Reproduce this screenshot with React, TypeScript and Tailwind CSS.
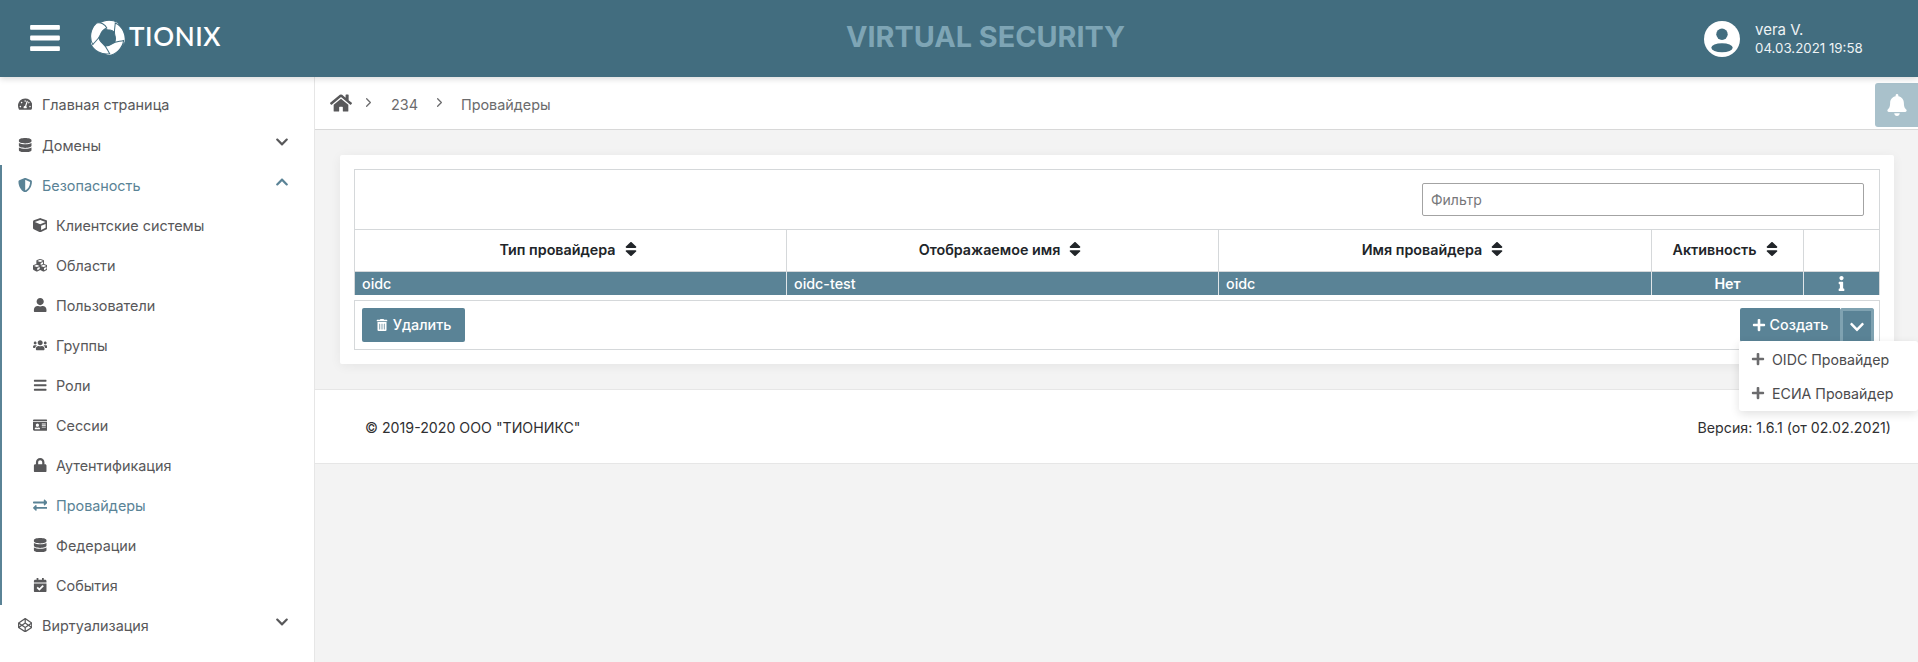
import type { ReactNode } from 'react';
import {
  FaBars, FaBell, FaCalendarCheck, FaChevronDown, FaChevronUp, FaCodepen, FaCube, FaCubes, FaDatabase,
  FaExchangeAlt, FaHome, FaIdCard, FaInfo, FaLock, FaPlus, FaShieldAlt, FaSort, FaTachometerAlt, FaTrashAlt,
  FaUser, FaUsers,
} from 'react-icons/fa';
import { LuChevronRight } from 'react-icons/lu';

const blade = 'M6 5.5 C11 0 20 -1.5 27 2.5 C29.5 6 28.5 11 25.5 13.5 C23 10.5 20 9.5 17 9.5 C13 9.3 10 7 6 5.5 Z';

const Logo = () => (
  <svg viewBox="0 0 34 34" className="w-[35px] h-[35px] -mt-[3px] -ml-[1px]" fill="#fff" stroke="#426d7f" strokeWidth="1">
    {[0, 72, 144, 216, 288].map((deg) => (
      <path key={deg} d={blade} transform={`rotate(${deg} 17 17)`} />
    ))}
  </svg>
);

const Avatar = () => (
  <svg viewBox="0 0 36 36" className="w-[36px] h-[36px]">
    <circle cx="18" cy="18" r="18" fill="#fff" />
    <circle cx="18" cy="13.3" r="5.7" fill="#426d7f" />
    <ellipse cx="18" cy="26.7" rx="10.7" ry="4.5" fill="#426d7f" />
  </svg>
);

type NavProps = { icon: ReactNode; label: string; active?: boolean; sub?: boolean; chevron?: 'up' | 'down'; className?: string };

const NavItem = ({ icon, label, active, sub, chevron, className = '' }: NavProps) => (
  <div className={`h-10 flex items-center ${sub ? 'pl-[32px]' : 'pl-[17px]'} pr-[25px] ${active ? 'text-[#5a8396]' : 'text-[#58585a]'} ${className}`}>
    <span className="w-4 flex justify-center text-[14.4px] shrink-0">{icon}</span>
    <span className={`${sub ? 'ml-[8px]' : 'ml-[9px]'} pt-[2px] text-[14.4px] flex-1`}>{label}</span>
    {chevron === 'down' && <FaChevronDown className="text-[14px] -mt-[6px] text-[#58585a]" />}
    {chevron === 'up' && <FaChevronUp className="text-[14px] -mt-[6px]" />}
  </div>
);

const Th = ({ label, className }: { label: string; className: string }) => (
  <div className={`${className} flex items-center justify-center gap-[9px] pr-[5px] pb-[2px] font-semibold text-[14.3px] text-[#212529] border-r border-[#d5d8da]`}>
    {label}
    <FaSort preserveAspectRatio="none" className="w-[12px] h-[18px] -mt-[1px]" />
  </div>
);

const Td = ({ children, className }: { children: ReactNode; className: string }) => (
  <div className={`${className} flex items-center border-r border-[#dfe5e8] text-[14.3px] font-medium text-white`}>{children}</div>
);

export default function App() {
  return (
    <div className="w-[1918px] h-[662px] overflow-hidden flex flex-col bg-[#f3f3f3] font-['Inter',sans-serif]">
      <header className="h-[77px] shrink-0 bg-[#426d7f] flex items-center relative z-10 shadow-[0_2px_6px_rgba(0,0,0,0.15)]">
        <div className="w-[91px] pl-[30px]">
          <FaBars className="text-white w-[30px] h-[34px] -mt-[2px]" />
        </div>
        <Logo />
        <span className="ml-[4px] -mt-[4px] text-white text-[26px] font-semibold font-['Lato',sans-serif] tracking-[0.6px]">TIONIX</span>
        <div className="flex-1 flex justify-center pl-[46px]">
          <span className="-mt-[4px] font-bold text-[28.8px] text-[#7ea5b5]">VIRTUAL SECURITY</span>
        </div>
        <div className="w-[214px] flex items-center">
          <Avatar />
          <div className="ml-[15px] mt-[1px] text-[15px] leading-[19px] text-[#eef3f5]">
            <div>vera V.</div>
            <div className="text-[13.3px]">04.03.2021 19:58</div>
          </div>
        </div>
      </header>

      <div className="flex flex-1 min-h-0">
        <aside className="w-[315px] shrink-0 bg-white border-r border-[#e6e6e6] pt-[7px]">
          <NavItem icon={<FaTachometerAlt />} label="Главная страница" />
          <NavItem icon={<FaDatabase />} label="Домены" chevron="down" className="mt-px" />
          <div className="border-l-2 border-[#5a8396]">
            <div className="-ml-[2px]">
              <NavItem icon={<FaShieldAlt />} label="Безопасность" active chevron="up" />
              <NavItem sub icon={<FaCube />} label="Клиентские системы" />
              <NavItem sub icon={<FaCubes />} label="Области" />
              <NavItem sub icon={<FaUser />} label="Пользователи" />
              <NavItem sub icon={<FaUsers />} label="Группы" />
              <NavItem sub icon={<FaBars />} label="Роли" />
              <NavItem sub icon={<FaIdCard />} label="Сессии" />
              <NavItem sub icon={<FaLock />} label="Аутентификация" />
              <NavItem sub active icon={<FaExchangeAlt />} label="Провайдеры" />
              <NavItem sub icon={<FaDatabase />} label="Федерации" />
              <NavItem sub icon={<FaCalendarCheck />} label="События" />
            </div>
          </div>
          <NavItem icon={<FaCodepen />} label="Виртуализация" chevron="down" />
        </aside>

        <main className="flex-1 min-w-0 flex flex-col">
          <div className="h-[53px] shrink-0 bg-white border-b border-[#d8d8d8] flex items-center relative pt-[2px] text-[14.4px] text-[#6b6b6d]">
            <FaHome className="ml-[15px] text-[22px] text-[#58585a] -mt-[2px]" />
            <LuChevronRight className="ml-[9px] text-[15px] -mt-[4px]" />
            <span className="ml-[15px] mt-[2px]">234</span>
            <LuChevronRight className="ml-[14px] text-[15px] -mt-[4px]" />
            <span className="ml-[14px] mt-[2px]">Провайдеры</span>
            <div className="absolute right-0 top-[6px] w-[43px] h-[44px] bg-[#a9c1cb] rounded-l-[3px] flex items-center justify-center">
              <FaBell className="text-white text-[22px]" />
            </div>
          </div>

          <div className="pt-[25px] pl-[25px] pr-[24px]">
            <div className="bg-white rounded-[2px] shadow-[0_2px_12px_rgba(0,0,0,0.06)] px-[14px] pt-[14px] h-[209px]">
              <div className="border border-[#d5d8da] border-b-0">
                <div className="h-[59px] flex items-center justify-end pr-[15px]">
                  <div className="w-[442px] h-[33px] border border-[#a3a3a3] rounded-[2px] flex items-center pl-[8px] text-[14px] text-[#77777a]">Фильтр</div>
                </div>
                <div className="h-[42px] border-t border-[#d5d8da] flex">
                  <Th label="Тип провайдера" className="w-[432px]" />
                  <Th label="Отображаемое имя" className="w-[432px]" />
                  <Th label="Имя провайдера" className="w-[433px]" />
                  <Th label="Активность" className="w-[152px]" />
                  <div className="flex-1" />
                </div>
                <div className="h-[24px] bg-[#5a8396] flex border-t border-[#d5d8da]">
                  <Td className="w-[432px] pl-[7px]">oidc</Td>
                  <Td className="w-[432px] pl-[7px]">oidc-test</Td>
                  <Td className="w-[433px] pl-[7px]">oidc</Td>
                  <Td className="w-[152px] justify-center font-semibold">Нет</Td>
                  <div className="flex-1 flex items-center justify-center text-white"><FaInfo className="text-[15px]" /></div>
                </div>
              </div>
              <div className="mt-[5px] h-[50px] border border-[#d5d8da] flex items-center justify-between pl-[7px] pr-[5px] relative">
                <button className="h-[34px] w-[103px] bg-[#5a8396] rounded-[2px] text-white text-[14.3px] font-medium flex items-center justify-center gap-[5px]">
                  <FaTrashAlt className="text-[12px]" />
                  Удалить
                </button>
                <div className="flex h-[34px]">
                  <button className="w-[100px] bg-[#5a8396] rounded-l-[2px] text-white text-[14.3px] font-medium flex items-center justify-center gap-[4px]">
                    <FaPlus className="text-[14px]" />
                    Создать
                  </button>
                  <button className="w-[34px] bg-[#5a8396] border-[3px] border-[#7fa2b1] border-b-0 rounded-t-[3px] text-white flex items-center justify-center">
                    <FaChevronDown className="text-[16px]" />
                  </button>
                </div>
              </div>
            </div>
          </div>

          <footer className="mt-[25px] h-[75px] shrink-0 bg-white border-y border-[#e6e6e6] flex items-center justify-between pl-[50px] pr-[27px] pt-[3px] text-[14.2px] text-[#303032] relative">
            <span>© 2019-2020 ООО "ТИОНИКС"</span>
            <span>Версия: 1.6.1 (от 02.02.2021)</span>
            <div className="absolute right-0 -top-[49px] w-[179px] h-[70px] bg-white rounded-[3px] shadow-[0_3px_10px_rgba(0,0,0,0.12)] flex flex-col justify-center pt-[2px] text-[14.2px] text-[#4b4b4d] z-10">
              <div className="h-[35px] flex items-center pl-[12px] gap-[7px]"><FaPlus className="text-[14px] text-[#6b6b6d] -mt-[2px]" />OIDC Провайдер</div>
              <div className="h-[35px] flex items-center pl-[12px] gap-[7px]"><FaPlus className="text-[14px] text-[#6b6b6d] -mt-[2px]" />ЕСИА Провайдер</div>
            </div>
          </footer>
        </main>
      </div>
    </div>
  );
}
